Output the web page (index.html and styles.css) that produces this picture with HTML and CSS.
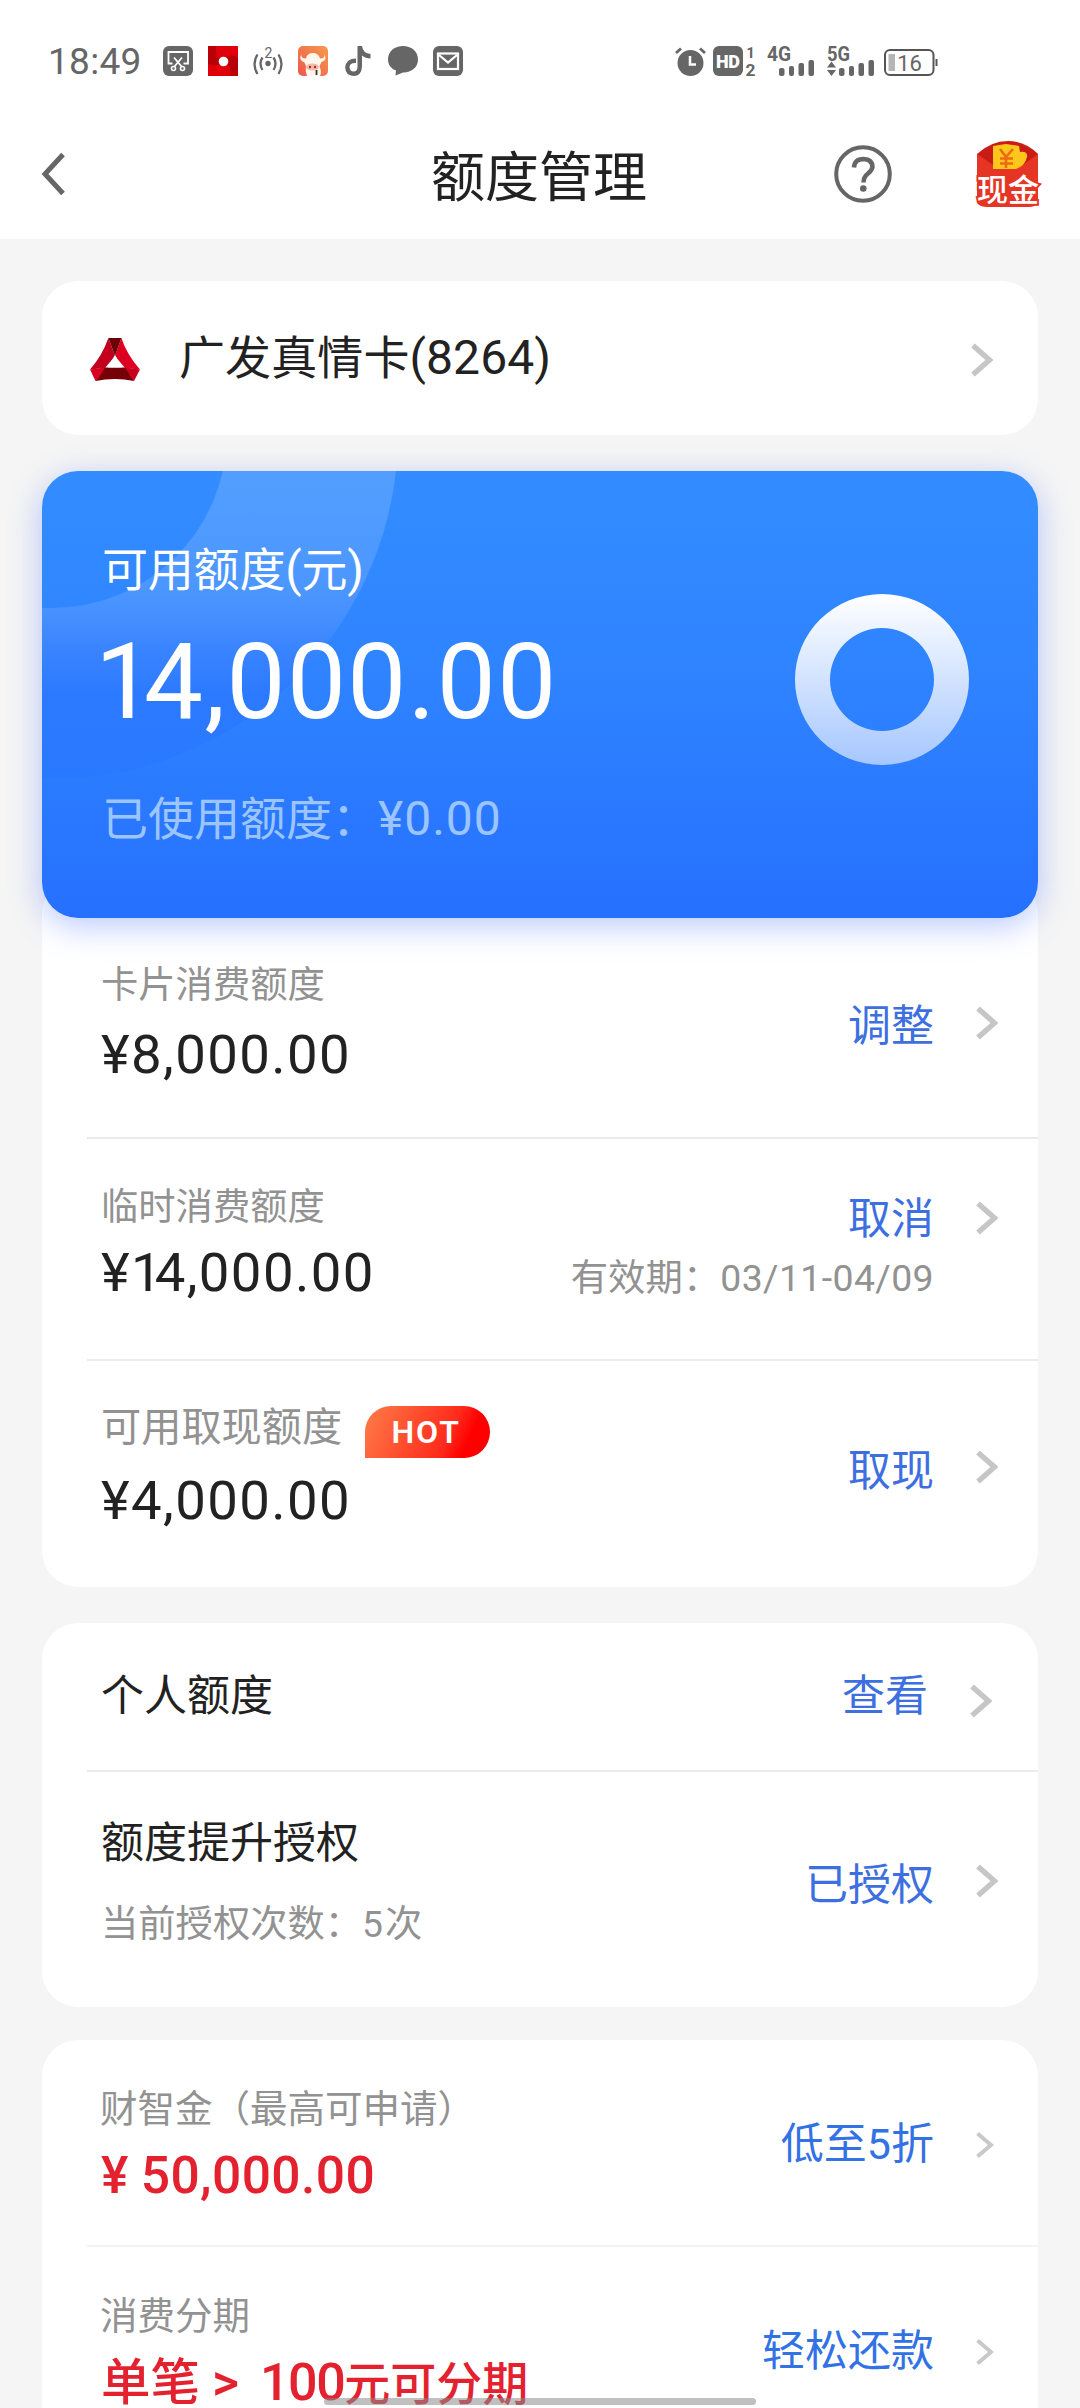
FILE: index.html
```html
<!DOCTYPE html>
<html lang="zh-CN">
<head>
<meta charset="utf-8">
<title>额度管理</title>
<link rel="stylesheet" href="styles.css">
</head>
<body>
<svg width="0" height="0" class="defs">
  <symbol id="chev" viewBox="0 0 22 34"><path d="M2 2.500 L18.500 17 L2 31.500" fill="none" stroke="#c6c6c6" stroke-width="5.500"/></symbol>
  <symbol id="chev-s" viewBox="0 0 18 26"><path d="M1.500 1.500 L15 13 L1.500 24.500" fill="none" stroke="#c9c9c9" stroke-width="4"/></symbol>
</svg>
<div class="page">
  <header class="top">
    <div class="status">
      <span class="clock">18:49</span>
      <div class="tray">
        <svg width="30" height="30" viewBox="0 0 30 30"><rect width="30" height="30" rx="6" fill="#666"/><path d="M9.500 17.500H5.500V6H25V17.500H20.500M11 11.500L19 21M19 11.500L11 21" fill="none" stroke="#fff" stroke-width="1.800"/><circle cx="10.500" cy="22.500" r="2" fill="#666" stroke="#fff" stroke-width="1.600"/><circle cx="19.500" cy="22.500" r="2" fill="#666" stroke="#fff" stroke-width="1.600"/></svg>
        <svg width="30" height="30" viewBox="0 0 30 30"><rect width="30" height="30" fill="#e0000c"/><path d="M0 0H8Q6 12 15 15Q10 22 0 18ZM30 30H22Q24 18 15 15Q22 6 30 12Z" fill="#b80008"/><circle cx="15.500" cy="15.500" r="4.800" fill="#fff"/></svg>
        <svg width="30" height="30" viewBox="0 0 30 30"><circle cx="15" cy="17.500" r="2.700" fill="#666"/><path d="M9.500 11.500Q5.500 17.500 9.500 24M20.500 11.500Q24.500 17.500 20.500 24M4.500 8.500Q-1.500 18 4.500 28M25.500 8.500Q31.500 18 25.500 28" fill="none" stroke="#666" stroke-width="2.300"/><text x="15.500" y="11.500" font-size="14" text-anchor="middle" fill="#666">2</text></svg>
        <svg width="30" height="30" viewBox="0 0 30 30"><defs><linearGradient id="cow" x1="1" y1="0" x2="0" y2="1"><stop offset="0" stop-color="#f59a4a"/><stop offset="1" stop-color="#f0564f"/></linearGradient></defs><rect width="30" height="30" rx="5" fill="url(#cow)"/><path d="M3.500 8Q2.500 12.500 8 12.500Q9 7 15 7Q20.500 7 22 12.500Q27.500 12.500 26 8Q30 14 23.500 16L21.500 20Q24 26 22 30H9Q7 25 8 20L6.500 16.500Q0 14 3.500 8Z" fill="#fff6ec"/><ellipse cx="14.500" cy="21" rx="6.500" ry="3.600" fill="#f8b9a6"/><circle cx="12" cy="21" r="1.200" fill="#8c3a30"/><circle cx="17" cy="21" r="1.200" fill="#8c3a30"/><path d="M18.500 24V29" stroke="#333" stroke-width="1.800"/></svg>
        <svg width="30" height="30" viewBox="0 0 30 30"><path d="M13 12.500V17Q6.500 16.500 6.500 21.500Q7 25.500 10.500 25.500Q14.500 25.500 14.500 20.500V0H19Q20 7.500 27.500 8V12.500Q22.500 12.500 19 9.500V20.500Q18.500 30 10.500 30Q2.500 29.500 2.200 21.500Q3 12.500 13 12.500Z" fill="#666"/></svg>
        <svg width="30" height="30" viewBox="0 0 30 30"><path d="M15 0C23 0 30 5 30 13.500C30 21 24 26.500 15 26.500L7.500 29.500L8 24.500C3 22.500 0 18.500 0 13.500C0 5 7 0 15 0Z" fill="#666"/></svg>
        <svg width="30" height="30" viewBox="0 0 30 30"><rect width="30" height="30" rx="6" fill="#666"/><rect x="5" y="7.500" width="20" height="15.500" fill="none" stroke="#fff" stroke-width="2.200"/><path d="M6 9L15 16.500L24 9" fill="none" stroke="#fff" stroke-width="2.200"/></svg>
      </div>
      <div class="signal">
        <svg width="30" height="30" viewBox="0 0 30 30"><circle cx="15.500" cy="17" r="13" fill="#666"/><path d="M1 7L6 2.500M30 7L25 2.500" stroke="#666" stroke-width="2.800"/><path d="M15 10V18.500H21" fill="none" stroke="#fff" stroke-width="2.500"/></svg>
        <svg width="43" height="30" viewBox="0 0 43 30"><rect width="30" height="30" rx="6" fill="#666"/><text x="3" y="21.500" font-size="18" font-weight="900" fill="#fff" textLength="24">HD</text><text x="37.500" y="11.500" font-size="15" font-weight="700" text-anchor="middle" fill="#666">1</text><text x="32.500" y="29.500" font-size="16" font-weight="700" fill="#666" textLength="10" lengthAdjust="spacingAndGlyphs">2</text></svg>
        <svg width="48" height="30" viewBox="0 0 48 30"><text x="0" y="14.500" font-size="20" font-weight="700" fill="#666" textLength="24" lengthAdjust="spacingAndGlyphs">4G</text><g fill="#666"><rect x="12" y="22" width="5.500" height="8" rx="2"/><rect x="22" y="20" width="5" height="10" rx="2"/><rect x="31.500" y="17" width="5.500" height="13" rx="2"/><rect x="41.500" y="14" width="5.500" height="16" rx="2"/></g></svg>
        <svg width="48" height="30" viewBox="0 0 48 30"><text x="0" y="14.500" font-size="20" font-weight="700" fill="#666" textLength="23" lengthAdjust="spacingAndGlyphs">5G</text><g fill="#666"><path d="M0 21.500L4.500 15.500L9 21.500ZM0 24L4.500 30L9 24Z"/><rect x="12" y="22" width="5.500" height="8" rx="2"/><rect x="22" y="20" width="5" height="10" rx="2"/><rect x="31.500" y="17" width="5.500" height="13" rx="2"/><rect x="41.500" y="14" width="5.500" height="16" rx="2"/></g></svg>
        <svg width="54" height="30" viewBox="0 0 54 30"><rect x="1" y="4" width="48.500" height="25" rx="5" fill="none" stroke="#555" stroke-width="2"/><rect x="4.500" y="8" width="6.500" height="17" fill="#b5b5b5"/><path d="M52.500 13V20" stroke="#555" stroke-width="2"/><text x="25.500" y="24.500" font-size="22" text-anchor="middle" fill="#666">16</text></svg>
      </div>
    </div>
    <div class="nav">
      <svg class="back" width="24" height="42" viewBox="0 0 24 42"><path d="M22 1.500L4 21L22 40.500" fill="none" stroke="#666" stroke-width="5"/></svg>
      <h1>额度管理</h1>
      <svg class="help" width="60" height="60" viewBox="0 0 60 60"><circle cx="30" cy="30" r="26.800" fill="none" stroke="#666" stroke-width="4"/><path d="M21 23.500Q21.500 15 30.500 15Q39.500 15.500 39.500 23Q39 26.500 35 29.500Q30.500 33 30.500 38.500" fill="none" stroke="#666" stroke-width="4.500"/><circle cx="30.300" cy="44.500" r="3.300" fill="#666"/></svg>
      <svg class="cash" width="66" height="68" viewBox="0 0 66 68"><path d="M2 14Q16 1 33 1Q50 1 63 14V40H2Z" fill="#c91c14"/><path d="M2 14L24 29H42L63 14V63Q60 67 54 67H12Q5 67 2 63Z" fill="#e63524"/><path d="M18 6L31 4L44 6L45 12Q53 11 52 17Q50 26 41 29L18 29Z" fill="#ffc61c"/><path d="M25 9L31 17L38 9M31 17V28M25 18.500H38M25 23.500H38" fill="none" stroke="#ee6a12" stroke-width="2.500"/><text x="33" y="60.500" class="cash-text" text-anchor="middle">现金</text></svg>
    </div>
  </header>

  <main>
    <section class="card account">
      <svg width="50" height="43" viewBox="0 0 50 43"><path d="M18.400 0L25 18L15 30L0 31.500Q12 18 18.400 0Z" fill="#c1001d"/><path d="M31.400 0Q37 17 50 31.500L35 30L25 18Z" fill="#dd0021"/><path d="M18.400 0H31.400L25 18Z" fill="#6c0007"/><path d="M14 29.500H36L44 43Q25 39 5.500 43Z" fill="#760008"/><path d="M0 31.500L15 29.500L8 41L5.500 43Z" fill="#d8001f"/><path d="M50 31.500L35 29.500L42 41L44 43Z" fill="#c8001d"/><path d="M25 17L18 29.500H32Z" fill="#fff"/></svg>
      <span class="account-name">广发真情卡<span class="num">(8264)</span></span>
      <svg class="chev" width="22" height="34"><use href="#chev"/></svg>
    </section>

    <section class="hero">
      <svg class="rings" width="996" height="447" viewBox="0 0 996 447"><defs><linearGradient id="arc" gradientUnits="userSpaceOnUse" x1="0" y1="0" x2="0" y2="310"><stop offset="0" stop-color="#fff" stop-opacity=".15"/><stop offset=".35" stop-color="#fff" stop-opacity=".135"/><stop offset=".58" stop-color="#5f80ff" stop-opacity=".2"/><stop offset=".72" stop-color="#2060ff" stop-opacity=".25"/><stop offset="1" stop-color="#2468ff" stop-opacity=".14"/></linearGradient></defs><circle cx="10" cy="-38" r="260.500" fill="none" stroke="url(#arc)" stroke-width="171"/></svg>
      <div class="hero-text">
        <div class="hero-label">可用额度<span class="num">(</span>元<span class="num">)</span></div>
        <div class="hero-sum"><span class="one">1</span>4,000.00</div>
        <div class="hero-used">已使用额度：<span class="num">¥0.00</span></div>
      </div>
      <svg class="donut" width="174" height="171" viewBox="0 0 174 171"><defs><linearGradient id="dg" x1="0" y1="0" x2="0" y2="1"><stop offset="0" stop-color="#fff"/><stop offset="1" stop-color="#a6c7ff"/></linearGradient></defs><path fill="url(#dg)" fill-rule="evenodd" d="M0 85.500A87 85.500 0 0 1 174 85.500A87 85.500 0 0 1 0 85.500ZM35 85.500A52 51.500 0 0 0 139 85.500A52 51.500 0 0 0 35 85.500Z"/></svg>
    </section>

    <section class="card list limits">
      <div class="row r-spend">
        <div class="info"><div class="label">卡片消费额度</div><div class="sum">¥8,000.00</div></div>
        <div class="side"><div class="act">调整</div></div>
        <svg class="chev" width="22" height="34"><use href="#chev"/></svg>
      </div>
      <div class="row r-temp">
        <div class="info"><div class="label">临时消费额度</div><div class="sum">¥<span class="one">1</span>4,000.00</div></div>
        <div class="side"><div class="act">取消</div><div class="valid">有效期：<span class="date">03/11-04/09</span></div></div>
        <svg class="chev" width="22" height="34"><use href="#chev"/></svg>
      </div>
      <div class="row r-cash">
        <div class="info"><div class="tagged"><div class="label">可用取现额度</div><span class="hot">HOT</span></div><div class="sum">¥4,000.00</div></div>
        <div class="side"><div class="act">取现</div></div>
        <svg class="chev" width="22" height="34"><use href="#chev"/></svg>
      </div>
    </section>

    <section class="card list personal">
      <div class="row r-own">
        <div class="info"><div class="name">个人额度</div></div>
        <div class="side"><div class="act">查看</div></div>
        <svg class="chev" width="22" height="34"><use href="#chev"/></svg>
      </div>
      <div class="row r-auth">
        <div class="info"><div class="name">额度提升授权</div><div class="label">当前授权次数：<span class="count">5</span>次</div></div>
        <div class="side"><div class="act">已授权</div></div>
        <svg class="chev" width="22" height="34"><use href="#chev"/></svg>
      </div>
    </section>

    <section class="card list loans">
      <div class="row r-fund">
        <div class="info"><div class="label">财智金（最高可申请）</div><div class="red"><span class="yen">¥</span>50,000.00</div></div>
        <div class="side"><div class="act">低至5折</div></div>
        <svg class="chev" width="18" height="26"><use href="#chev-s"/></svg>
      </div>
      <div class="row r-split">
        <div class="info"><div class="label">消费分期</div><div class="red promo"><span class="lead">单笔</span><span class="gt">&gt;</span><span class="hundred">100</span>元可分期</div></div>
        <div class="side"><div class="act">轻松还款</div></div>
        <svg class="chev" width="18" height="26"><use href="#chev-s"/></svg>
      </div>
    </section>
  </main>
  <div class="home-bar"></div>
</div>
</body>
</html>
```

FILE: styles.css
```css
* { box-sizing: border-box; }
body { margin: 0; background: #f5f5f5; font-family: Roboto, "Noto Sans CJK SC", sans-serif; color: #222; }
svg { display: block; flex: none; overflow: visible; }
.defs { position: absolute; }
.page { position: relative; width: 1080px; height: 2408px; overflow: hidden; background: #f5f5f5; }

.top { height: 239px; background: #fff; }
.status { display: flex; align-items: flex-start; height: 122px; padding: 46px 0 0 48px; }
.clock { width: 115px; font-size: 37px; line-height: 32px; letter-spacing: 0.3px; color: #666; white-space: nowrap; }
.tray { display: flex; gap: 15px; width: 512px; }
.signal { display: flex; }
.signal svg:nth-child(2) { margin-left: 8px; }
.signal svg:nth-child(3) { margin-left: 11px; }
.signal svg:nth-child(4) { margin-left: 12px; }
.signal svg:nth-child(5) { margin-left: 9px; }

.nav { display: flex; align-items: flex-start; padding-left: 41px; }
.back { margin-top: 31px; }
.nav h1 { margin: 27px 0 0 366px; width: 402px; font-size: 54px; line-height: 60px; font-weight: 400; white-space: nowrap; }
.help { margin-top: 22px; }
.cash { margin: 18px 0 0 82px; }
.cash-text { font-size: 31px; font-weight: 500; fill: #fff; stroke: #e63524; stroke-width: 4px; paint-order: stroke; }

main { padding: 42px 42px 0; }
.card { background: #fff; border-radius: 36px; }
.num { font-size: 48px; }

.account { display: flex; align-items: center; height: 154px; padding: 0 45px 0 48px; }
.account-name { flex: 1; margin-left: 39px; font-size: 46px; line-height: 60px; letter-spacing: 0.1px; }
.account svg:first-child { margin-top: 2px; }
.account .chev { margin-top: 4px; }

.hero { position: relative; display: flex; justify-content: space-between; height: 447px; margin-top: 36px; padding: 74px 69px 0 60px; border-radius: 36px; background: linear-gradient(#338dff, #2e82ff 50%, #2670ff); box-shadow: 0 8px 32px rgba(60, 105, 255, .36); color: #fff; }
.rings { position: absolute; left: 0; top: 0; border-radius: 36px; overflow: hidden; }
.hero-text { position: relative; white-space: nowrap; }
.hero-label { font-size: 46px; line-height: 50px; letter-spacing: -0.2px; }
.hero-sum { margin: 38px 0 0 -7px; font-size: 105px; line-height: 100px; letter-spacing: 1.4px; }
.hero-sum .one { letter-spacing: -10px; }
.hero-used { margin-top: 61px; font-size: 46px; line-height: 50px; color: #9cc5ff; }
.hero-used .num { letter-spacing: 1px; }
.donut { position: relative; margin-top: 49px; }

.limits { margin-top: -40px; padding-top: 40px; }
.personal { margin-top: 36px; }
.loans { margin-top: 33px; height: 420px; }
.row { display: flex; align-items: flex-start; margin-left: 45px; padding: 0 40px 0 14px; border-bottom: 2px solid #ebebeb; white-space: nowrap; }
.row:last-child { border-bottom: 0; }
.info { flex: 1; }
.label { font-size: 37.3px; line-height: 40px; color: #929292; }
.sum { font-size: 54.5px; line-height: 60px; letter-spacing: 1.4px; }
.name { font-size: 43px; line-height: 50px; }
.act { font-size: 43px; line-height: 50px; color: #3d6fe0; text-align: right; }
.side { margin-right: 42px; }

.r-spend { height: 221px; }
.r-spend .info { padding-top: 47px; }
.r-spend .sum { margin-top: 19px; }
.r-spend .side { padding-top: 83px; }
.r-spend .chev { margin-top: 88px; }

.r-temp { height: 222px; }
.r-temp .info { padding-top: 48px; }
.r-temp .sum { margin-top: 15px; }
.r-temp .one { letter-spacing: -7px; }
.r-temp .side { padding-top: 55px; }
.r-temp .chev { margin-top: 62px; }
.valid { margin-top: 14px; font-size: 37.4px; line-height: 40px; color: #929292; }
.date { letter-spacing: 0.4px; }

.r-cash { height: 226px; }
.r-cash .info { padding-top: 45px; }
.tagged { display: flex; align-items: flex-start; height: 52px; }
.tagged .label { margin-top: 2px; font-size: 40.2px; }
.hot { width: 125px; height: 52px; margin-left: 23px; border-radius: 28px 28px 28px 0; background: linear-gradient(115deg, #ff7d48, #ff2b1c 65%, #ff0000 80%); color: #fff; font-size: 32px; font-weight: 600; line-height: 53px; letter-spacing: 2px; text-align: center; padding-right: 3px; }
.r-cash .sum { margin-top: 12px; }
.r-cash .side { padding-top: 85px; }
.r-cash .chev { margin-top: 89px; }

.r-own { height: 149px; padding-right: 46px; }
.r-own .info { padding-top: 48px; }
.r-own .side { padding-top: 48px; }
.r-own .chev { margin-top: 61px; }

.r-auth { height: 235px; }
.r-auth .info { padding-top: 46px; }
.r-auth .label { margin-top: 36px; }
.r-auth .count { letter-spacing: 2px; }
.r-auth .side { padding-top: 88px; }
.r-auth .chev { margin-top: 92px; }

.loans .row { padding-right: 44px; }
.loans .act { color: #3272e4; }
.r-fund { height: 207px; border-bottom-color: #f3f3f3; }
.loans .info { padding-top: 49px; }
.loans .label { margin-left: -1px; font-size: 37.5px; }
.red { margin-top: 17px; font-size: 51.5px; font-weight: 500; line-height: 60px; color: #e3212f; }
.r-fund .red { letter-spacing: 0.4px; }
.yen { margin-right: 12px; }
.r-fund .side { padding-top: 79px; }
.r-fund .chev { margin-top: 92px; }
.r-split .side { padding-top: 79px; }
.r-split .chev { margin-top: 92px; }
.red.promo { font-size: 46px; }
.promo .lead { font-size: 49.5px; }
.promo .gt { margin: 0 21px 0 12px; font-size: 52px; }
.promo .hundred { font-size: 52px; letter-spacing: -1.5px; }

.home-bar { position: absolute; left: 324px; top: 2398px; width: 432px; height: 7px; border-radius: 4px; background: rgba(140, 140, 140, .55); }
```
